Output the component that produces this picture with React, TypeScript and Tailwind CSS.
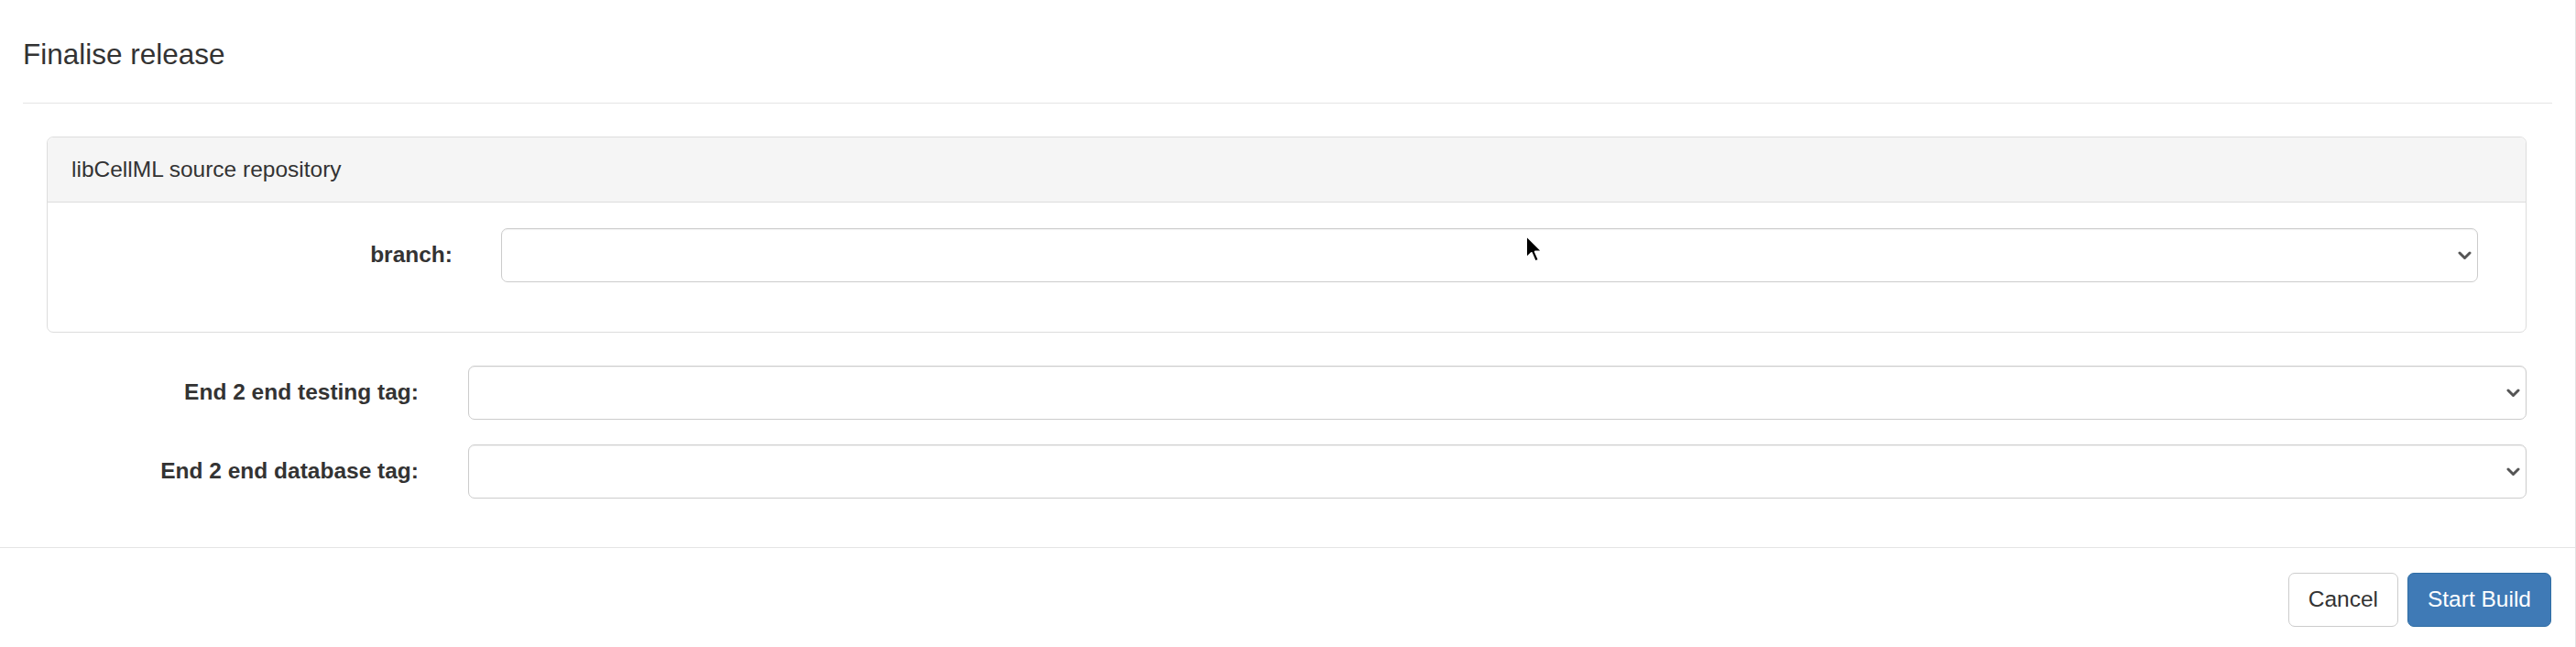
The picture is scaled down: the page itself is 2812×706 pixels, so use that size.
import React from 'react';

const Chevron = () => (
  <svg
    className="absolute right-[7px] top-1/2 -translate-y-1/2 pointer-events-none"
    width="15"
    height="10"
    viewBox="0 0 15 10"
  >
    <polyline points="2,2 7.5,7.5 13,2" fill="none" stroke="#555" strokeWidth="3" strokeLinecap="round" strokeLinejoin="round" />
  </svg>
);

function SelectBox() {
  return (
    <div className="relative flex-1">
      <select className="block w-full h-[59px] appearance-none bg-white border border-[#ccc] rounded-[7px] px-[21px] text-[24.5px] text-[#555] outline-none shadow-[inset_0_1px_1px_rgba(0,0,0,0.05)]">
        <option value=""></option>
      </select>
      <Chevron />
    </div>
  );
}

function Cursor() {
  return (
    <svg className="absolute left-[1664px] top-[255px]" width="24" height="34" viewBox="0 0 12 17">
      <path
        d="M1 1 L1 13.2 L3.9 10.5 L5.9 15.2 L7.9 14.3 L5.9 9.8 L9.8 9.8 Z"
        fill="#000"
        stroke="#fff"
        strokeWidth="1"
        strokeLinejoin="round"
      />
    </svg>
  );
}

export default function App() {
  return (
    <div className="relative w-[2812px] h-[706px] overflow-hidden bg-white border-r border-[#e3e3e3] text-[#333] font-['Liberation_Sans',Arial,sans-serif]">
      {/* Header */}
      <div className="px-[25px]">
        <div className="border-b border-[#e5e5e5] pt-[37px] pb-[30px]">
          <h4 className="m-0 text-[31.5px] leading-[45px] font-normal">Finalise release</h4>
        </div>
      </div>

      {/* Body */}
      <div className="pl-[51px] pr-[53px] pt-[36px] pb-[53px]">
        <div className="border border-[#ddd] rounded-[7px] mb-[36px]">
          <div className="h-[71px] flex items-center px-[26px] bg-[#f5f5f5] border-b border-[#ddd] rounded-t-[7px] text-[24.5px]">
            libCellML source repository
          </div>
          <div className="px-[52px] pt-[28px] pb-[54px]">
            <div className="flex items-center">
              <label className="w-[443px] pr-[53px] text-right font-bold text-[24.5px]">branch:</label>
              <SelectBox />
            </div>
          </div>
        </div>

        <div className="flex items-center mb-[27px]">
          <label className="w-[460px] pr-[54px] text-right font-bold text-[24.5px]">End 2 end testing tag:</label>
          <SelectBox />
        </div>
        <div className="flex items-center">
          <label className="w-[460px] pr-[54px] text-right font-bold text-[24.5px]">End 2 end database tag:</label>
          <SelectBox />
        </div>
      </div>

      {/* Footer */}
      <div className="border-t border-[#e5e5e5] pt-[27px] px-[26px] flex justify-end gap-[10px]">
        <button className="h-[59px] px-[21px] bg-white border border-[#ccc] rounded-[7px] text-[24.5px] text-[#333]">
          Cancel
        </button>
        <button className="h-[59px] px-[21px] bg-[#3f7ab6] border border-[#2e6da4] rounded-[7px] text-[24.5px] text-white">
          Start Build
        </button>
      </div>

      <Cursor />
    </div>
  );
}
